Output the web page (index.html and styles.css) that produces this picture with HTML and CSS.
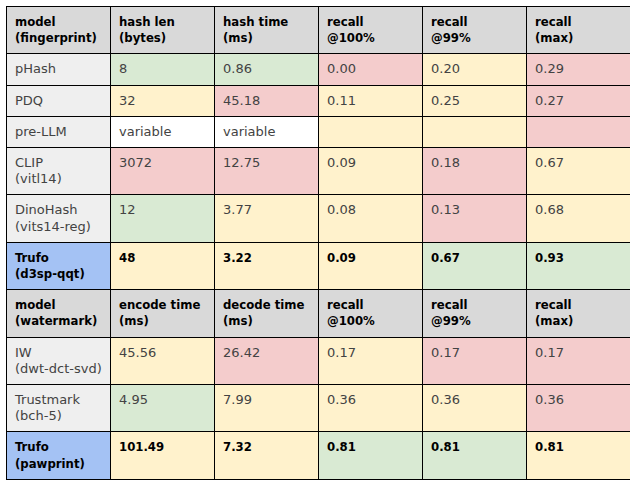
FILE: index.html
```html
<!DOCTYPE html>
<html>
<head>
<meta charset="utf-8">
<link rel="stylesheet" href="styles.css">
</head>
<body>
<table class="results">
  <colgroup>
    <col class="c"><col class="c"><col class="c"><col class="c"><col class="c"><col class="c">
  </colgroup>
  <tbody>
    <tr class="head">
      <td>model<br>(fingerprint)</td><td>hash len<br>(bytes)</td><td>hash time<br>(ms)</td><td>recall<br>@100%</td><td>recall<br>@99%</td><td>recall<br>(max)</td>
    </tr>
    <tr>
      <td class="name">pHash</td><td class="g">8</td><td class="g">0.86</td><td class="r">0.00</td><td class="y">0.20</td><td class="r">0.29</td>
    </tr>
    <tr>
      <td class="name">PDQ</td><td class="y">32</td><td class="r">45.18</td><td class="y">0.11</td><td class="y">0.25</td><td class="r">0.27</td>
    </tr>
    <tr>
      <td class="name">pre-LLM</td><td class="w">variable</td><td class="w">variable</td><td class="y"></td><td class="y"></td><td class="r"></td>
    </tr>
    <tr>
      <td class="name">CLIP<br>(vitl14)</td><td class="r">3072</td><td class="r">12.75</td><td class="y">0.09</td><td class="r">0.18</td><td class="y">0.67</td>
    </tr>
    <tr>
      <td class="name">DinoHash<br>(vits14-reg)</td><td class="g">12</td><td class="y">3.77</td><td class="y">0.08</td><td class="r">0.13</td><td class="y">0.68</td>
    </tr>
    <tr class="ours">
      <td class="b">Trufo<br>(d3sp-qqt)</td><td class="y">48</td><td class="y">3.22</td><td class="y">0.09</td><td class="g">0.67</td><td class="g">0.93</td>
    </tr>
    <tr class="head">
      <td>model<br>(watermark)</td><td>encode time<br>(ms)</td><td>decode time<br>(ms)</td><td>recall<br>@100%</td><td>recall<br>@99%</td><td>recall<br>(max)</td>
    </tr>
    <tr>
      <td class="name">IW<br>(dwt-dct-svd)</td><td class="y">45.56</td><td class="r">26.42</td><td class="y">0.17</td><td class="r">0.17</td><td class="r">0.17</td>
    </tr>
    <tr>
      <td class="name">Trustmark<br>(bch-5)</td><td class="g">4.95</td><td class="y">7.99</td><td class="y">0.36</td><td class="y">0.36</td><td class="r">0.36</td>
    </tr>
    <tr class="ours">
      <td class="b">Trufo<br>(pawprint)</td><td class="y">101.49</td><td class="y">7.32</td><td class="g">0.81</td><td class="g">0.81</td><td class="y">0.81</td>
    </tr>
  </tbody>
</table>
</body>
</html>
```

FILE: styles.css
```css
html, body {
  background: #ffffff;
}
body {
  margin: 6px;
  font-family: "DejaVu Sans", sans-serif;
  font-size: 13px;
  color: #434343;
}
.results {
  border-collapse: collapse;
  table-layout: fixed;
  width: 624px;
}
.results .c {
  width: 104px;
}
.results td {
  border: 1px solid #000000;
  padding: 7px 8px;
  line-height: 16.2px;
  vertical-align: top;
  white-space: nowrap;
  overflow: hidden;
}
.head td,
.ours td {
  color: #000000;
  font-family: "DejaVu Sans Condensed", "DejaVu Sans", sans-serif;
  font-stretch: condensed;
  font-weight: 700;
}
.head td {
  background: #d9d9d9;
}
.name { background: #efefef; }
.g { background: #d9ead3; }
.y { background: #fff2cc; }
.r { background: #f4cccc; }
.w { background: #ffffff; }
.b { background: #a4c2f4; }
```
